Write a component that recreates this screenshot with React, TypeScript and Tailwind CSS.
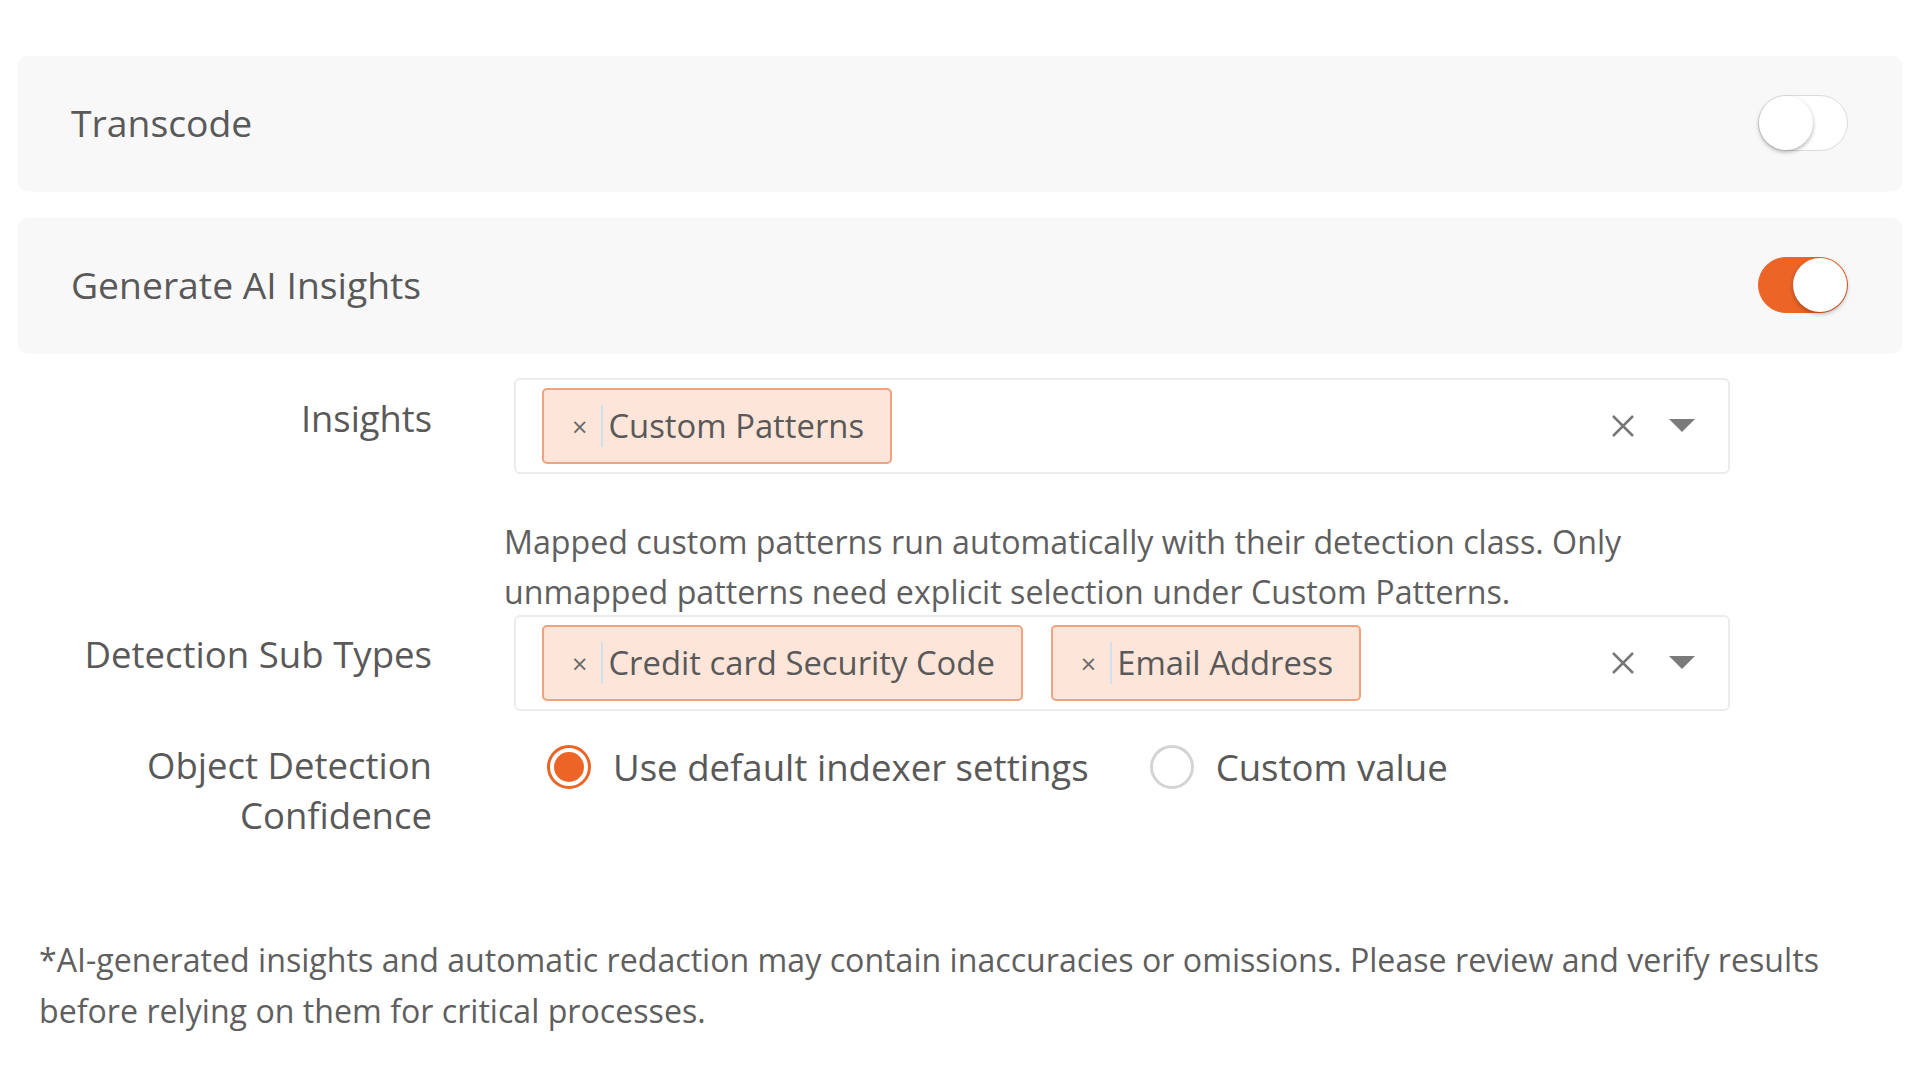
import React from "react";

const font = { fontFamily: '"Open Sans", "Noto Sans", sans-serif' };

function Toggle({ on }: { on: boolean }) {
  return (
    <div
      className={
        "relative w-[90px] h-[56px] rounded-full border " +
        (on ? "bg-[#ec6426] border-[#ec6426]" : "bg-white border-[#dcdcdc]")
      }
    >
      <div
        className={
          "absolute top-[0px] w-[54px] h-[54px] rounded-full bg-white shadow-[0_2px_4px_rgba(0,0,0,0.3)] " +
          (on ? "right-[0px]" : "left-[0px]")
        }
      />
    </div>
  );
}

function Panel({ title, on }: { title: string; on: boolean }) {
  return (
    <div className="h-[134px] rounded-[10px] bg-[#f8f8f8] shadow-[0_1px_3px_rgba(0,0,0,0.05)] flex items-center justify-between pl-[53px] pr-[54px]">
      <span className="text-[37.3px] text-[#595959]">{title}</span>
      <Toggle on={on} />
    </div>
  );
}

function Chip({ label }: { label: string }) {
  return (
    <div className="h-[76px] flex items-center rounded-[5px] border-2 border-[#f0a37f] bg-[#fde5d9] pl-[28px] pr-[26px]">
      <span className="text-[27px] text-[#6a6a6a] leading-none mr-[14px]">×</span>
      <span className="w-[2px] h-[42px] bg-[#cfe0f0] mr-[5px]" />
      <span className="text-[32.8px] text-[#595959] leading-none">{label}</span>
    </div>
  );
}

function MultiSelect({ chips }: { chips: string[] }) {
  return (
    <div className="h-[96px] w-[1216px] rounded-[6px] border-2 border-[#ececec] bg-white flex items-center pl-[26px] pr-[33px]">
      <div className="flex items-center gap-[28px] flex-1">
        {chips.map((c) => (
          <Chip key={c} label={c} />
        ))}
      </div>
      <svg width="24" height="22" viewBox="0 0 24 22" className="mr-[34px]">
        <path d="M2 1 L22 21 M22 1 L2 21" stroke="#777" strokeWidth="2.5" fill="none" />
      </svg>
      <svg width="26" height="14" viewBox="0 0 26 14">
        <path d="M0 0 L26 0 L13 13 Z" fill="#7a7a7a" />
      </svg>
    </div>
  );
}

function Radio({ checked, label }: { checked: boolean; label: string }) {
  return (
    <div className="flex items-center">
      <div
        className={
          "w-[44px] h-[44px] rounded-full border-[3px] flex items-center justify-center bg-white " +
          (checked ? "border-[#ec6426]" : "border-[#d4d4d4]")
        }
      >
        {checked && <div className="w-[30px] h-[30px] rounded-full bg-[#ec6426]" />}
      </div>
      <span className="ml-[22px] text-[36.6px] text-[#595959] leading-[50px]">{label}</span>
    </div>
  );
}

export default function App() {
  return (
    <div style={font} className="w-[1920px] h-[1080px] bg-white overflow-hidden">
      <div className="pt-[56px] px-[18px] flex flex-col gap-[28px]">
        <Panel title="Transcode" on={false} />
        <Panel title="Generate AI Insights" on={true} />
      </div>

      <div className="mt-[26px] pl-[18px]">
        <div className="flex">
          <div className="w-[414px] text-right text-[36.3px] text-[#595959] leading-[50px] pt-[15px]">Insights</div>
          <div className="ml-[82px]">
            <MultiSelect chips={["Custom Patterns"]} />
          </div>
        </div>

        <div className="flex mt-[43px]">
          <div className="w-[414px]" />
          <div className="ml-[72px] text-[32.2px] leading-[50px] text-[#5f5f5f]">
            Mapped custom patterns run automatically with their detection class. Only
            <br />
            unmapped patterns need explicit selection under Custom Patterns.
          </div>
        </div>

        <div className="flex -mt-[2px]">
          <div className="w-[414px] text-right text-[36.6px] text-[#595959] leading-[50px] pt-[14px]">Detection Sub Types</div>
          <div className="ml-[82px]">
            <MultiSelect chips={["Credit card Security Code", "Email Address"]} />
          </div>
        </div>

        <div className="flex mt-[29px]">
          <div className="w-[414px] text-right text-[36.5px] text-[#595959] leading-[50px]">
            Object Detection
            <br />
            Confidence
          </div>
          <div className="ml-[115px] flex items-start gap-[61px] pt-[2px]">
            <Radio checked={true} label="Use default indexer settings" />
            <Radio checked={false} label="Custom value" />
          </div>
        </div>
      </div>

      <div className="mt-[94px] pl-[39px] pr-[30px] text-[32.15px] leading-[51px] text-[#5f5f5f]">
        *AI-generated insights and automatic redaction may contain inaccuracies or omissions. Please review and verify results
        <br />
        before relying on them for critical processes.
      </div>
    </div>
  );
}
